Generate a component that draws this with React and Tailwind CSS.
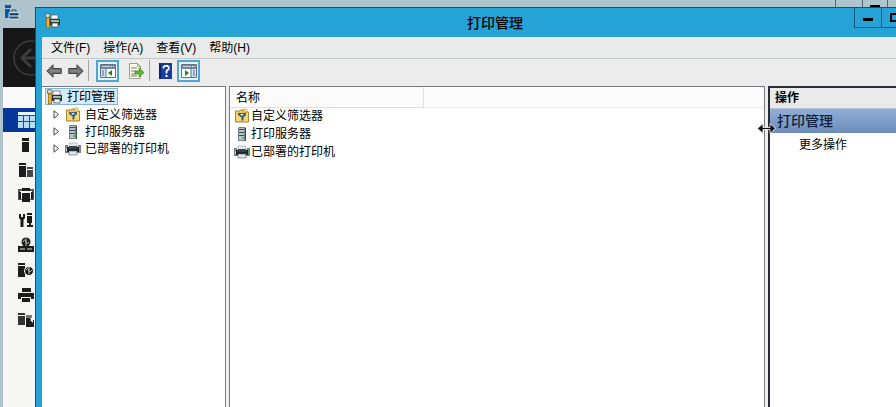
import React from 'react';

function PrintTools() {
  return (
    <svg viewBox="0 0 16 16" className="h-4 w-4 shrink-0" aria-hidden="true">
      <path d="M6 2h7v4H6z" fill="#fff" stroke="#555" strokeWidth=".7" />
      <path d="M5 6h10v6H5z" fill="#2d3238" />
      <path d="M6 7h8v2H6z" fill="#a9b4bb" />
      <path d="M7 10h6v4H7z" fill="#f4f8fa" stroke="#444" strokeWidth=".7" />
      <path d="M0 1.500 3 0l2.500 2-1.500 3H1z" fill="#d9d2bd" stroke="#5d4c2c" strokeWidth=".8" />
      <path d="M1.500 5h3v10h-3z" fill="#f3b51c" stroke="#8a5c00" strokeWidth=".7" />
      <path d="M13 7h1v1h-1z" fill="#46c04c" />
    </svg>
  );
}

function FilterFolder() {
  return (
    <svg viewBox="0 0 16 16" className="h-4 w-4 shrink-0" aria-hidden="true">
      <path d="M1.500 3h4l1-1h6v2h2v10h-13z" fill="#f2c557" stroke="#ad8433" />
      <path d="M2 5h12v8H2z" fill="#f8d678" />
      <path d="M4 5h8v2L9.500 9.500V12l-2 1V9.500L4 7z" fill="#3d5d72" />
      <path d="M6 6h4L8 8z" fill="#d7eef7" />
      <path d="M10 1h3v3h-3z" fill="#fff1b8" stroke="#b88c35" strokeWidth=".6" />
    </svg>
  );
}

function ServerTower() {
  return (
    <svg viewBox="0 0 16 16" className="h-4 w-4 shrink-0" aria-hidden="true">
      <path d="M5 1h6l1 1v13H4V2z" fill="#72828b" />
      <path d="M5 2h5v12H5z" fill="#b9c5ca" />
      <path d="M5 3h5v1H5zm0 3h5v1H5zm0 3h5v1H5z" fill="#3d4b54" />
      <path d="M8 11h2v2H8z" fill="#54c631" />
      <path d="M11 2h1v13h-1z" fill="#3c474e" />
    </svg>
  );
}

function PrinterColor() {
  return (
    <svg viewBox="0 0 16 16" className="h-4 w-4 shrink-0" aria-hidden="true">
      <path d="M4 2h8v4H4z" fill="#e6e9ec" stroke="#9ba0a5" strokeWidth=".6" />
      <path d="M0 4h3v2h10V4h3v8H0z" fill="#777f86" />
      <path d="M2 6h12v5H2z" fill="#20252a" />
      <path d="M4 5h8v3H4z" fill="#394149" />
      <path d="M4 10h8v4H4z" fill="#d9e6f0" stroke="#555f69" strokeWidth=".6" />
      <path d="M1 7h1v3H1z" fill="#c3cace" />
      <path d="M14 7h1v2h-1z" fill="#3db764" />
    </svg>
  );
}

function Arrow({ flip }) {
  return (
    <svg viewBox="0 0 16 14" className={flip ? 'h-[14px] w-4 rotate-180' : 'h-[14px] w-4'} aria-hidden="true">
      <path d="M.8 7 7 .8v3.700h8.200v5H7v3.700z" fill="#737373" stroke="#414141" />
      <path d="M4 7h10" stroke="#929292" />
    </svg>
  );
}

function PaneIcon({ right }) {
  return (
    <svg viewBox="0 0 16 14" className="h-[14px] w-4 shrink-0" aria-hidden="true">
      <path d="M.5.5h15v13H.5z" fill="#fff" stroke="#5f7287" />
      <path d="M1 1h14v4H1z" fill="#70869f" />
      <path d="M2 2h8v1H2z" fill="#c8d7e5" />
      <path d="M11 2h1v1h-1zm2 0h1v1h-1z" fill="#fff" />
      <path d={right ? 'M10 5h5v8h-5z' : 'M1 5h5v8H1z'} fill="#d3dfec" />
      <path d={right ? 'M10 5v8' : 'M6 5v8'} stroke="#5f7287" />
      <path d={right ? 'M12 7h2m-2 2h2m-2 2h2' : 'M2 7h2M2 9h2m-2 2h2'} stroke="#466d9c" />
      <path d={right ? 'M4 6v6l4-3z' : 'M12 6v6L8 9z'} fill="#1c8420" />
    </svg>
  );
}

function ExportIcon() {
  return (
    <svg viewBox="0 0 17 16" className="h-4 w-[17px]" aria-hidden="true">
      <path d="M1.500.5h8l3 3v12h-11z" fill="#fffde8" stroke="#a3a08c" />
      <path d="M9.500.5v3h3" fill="none" stroke="#a3a08c" />
      <path d="M3 5h6M3 8h5m-5 3h5m-5 2h6" stroke="#77777c" />
      <path d="M7 8h4V5l5 4.500-5 4.500v-3H7z" fill="#58bc2c" stroke="#378a20" strokeWidth=".7" />
    </svg>
  );
}

const navShapes = {
  server: <path d="M4 1h7v3H4zm0 4h7v10H4z" />,
  servers: (
    <>
      <path d="M1 1h7v2H1zm0 3h7v11H1z" />
      <path d="M9 5h6v2H9zm0 3h6v7H9z" fill="#444" />
    </>
  ),
  group: (
    <>
      <path d="M0 2h4v2H2v8h2v1H0zm12 0h4v11h-4v-1h2V4h-2z" fill="#555" />
      <path d="M4 1h8v3H4zm0 5h8v9H4z" />
      <path d="M1 5h2v7H1zm12 0h2v7h-2z" />
    </>
  ),
  tools: (
    <>
      <path d="M1 2h2v3h2V2h2v4L5.500 8v7h-3V8L1 6z" />
      <path d="M9 1h5v2H9zm0 3h5v7H9zm2 7h2v2h2v2H9v-2h2z" />
    </>
  ),
  network: (
    <>
      <circle cx="8" cy="5" r="4.500" />
      <path d="M5 5c1-3 3-2 3 0s2 2 3 0M8 1v8" fill="none" stroke="#bbb" />
      <path d="M0 9h16v6H0z" />
      <path d="M2 12h5m2 0h5" stroke="#ddd" />
    </>
  ),
  globe: (
    <>
      <path d="M0 1h7v2H0zm0 3h7v11H0z" />
      <circle cx="11" cy="9" r="4.500" stroke="#f8f8f4" />
      <path d="M8 8c2-3 3 0 3 1s2 1 3-1m-3-3v7" fill="none" stroke="#ccc" />
    </>
  ),
  printer: (
    <>
      <path d="M4 1h9v4H4zM0 6h16v6h-3v-2H3v2H0z" />
      <path d="M4 11h8v4H4z" />
    </>
  ),
  folders: (
    <>
      <path d="M0 1h7v2H0zm0 3h7v9H0z" fill="#333" />
      <path d="M8 3h6v3H8z" fill="#777" />
      <path d="M8 6h4l1 2h3v7H8z" />
      <path d="m12 8 3 3v-3z" fill="#eee" />
    </>
  ),
};

const navItems = [
  ['server', '本地服务器'],
  ['servers', '所有服务器'],
  ['group', '服务器组'],
  ['tools', '工具'],
  ['network', '网络'],
  ['globe', '远程服务'],
  ['printer', '打印服务'],
  ['folders', '文件服务'],
];

function ServerManager() {
  return (
    <aside className="flex w-[35px] shrink-0 flex-col overflow-hidden bg-[#afc3cc]">
      <div className="flex h-7 shrink-0 items-start pl-[5px] pt-[5px]">
        <svg viewBox="0 0 15 15" className="h-[15px] w-[15px]" aria-hidden="true">
          <path d="M0 0h6v3H0zm0 4h5v9H0z" fill="#0757ad" />
          <path d="M4 7.500h10V14H4z" fill="#24506f" stroke="#e5f2f8" strokeWidth=".8" />
          <path d="M4 11h10" fill="none" stroke="#e5f2f8" />
          <path d="M7 7V5h4v2" fill="none" stroke="#254c68" />
        </svg>
      </div>
      <div className="ml-[3px] flex min-h-0 flex-1 flex-col bg-[#f6f6f2]">
        <button aria-label="后退" className="flex h-[59px] shrink-0 items-center overflow-hidden bg-[#171717] pl-[10px]">
          <svg viewBox="0 0 36 36" className="h-9 w-9 shrink-0" fill="none" stroke="#3c3c3c" aria-hidden="true">
            <circle cx="18" cy="18" r="17" strokeWidth="1.500" />
            <path d="M30 18H9m9-9-9 9 9 9" strokeWidth="3" />
          </svg>
        </button>
        <div className="h-[21px] shrink-0 bg-[#fafafa]" />
        <nav className="flex flex-col">
          <button aria-label="仪表板" className="flex h-6 items-center bg-[#06389a] pl-[15px]">
            <svg viewBox="0 0 17 16" className="h-4 w-[17px] shrink-0" aria-hidden="true">
              <path d="M0 0h17v16H0z" fill="#b5dff8" />
              <path d="M0 0h17v3H0z" fill="#e7f7ff" />
              <path d="M0 3.500h17M0 9.500h17M5.500 4v12m6-12v12" stroke="#124caa" />
            </svg>
          </button>
          {navItems.map(([shape, label]) => (
            <button key={shape} aria-label={label} className="flex h-[25px] items-center pl-[15px]">
              <svg viewBox="0 0 16 16" className="h-4 w-4 shrink-0" fill="#1b1b1b" aria-hidden="true">
                {navShapes[shape]}
              </svg>
            </button>
          ))}
        </nav>
      </div>
    </aside>
  );
}

function Toolbar() {
  return (
    <div className="flex h-7 shrink-0 items-center border-t border-[#c4c7c8] bg-[#ececed] pb-1 pl-1">
      <button aria-label="后退"><Arrow /></button>
      <button aria-label="前进" className="ml-[6px]"><Arrow flip /></button>
      <span className="ml-1 h-[21px] w-px bg-[#a6a6a6]" />
      <button aria-label="显示控制台树" className="ml-[7px] flex h-[22px] w-[23px] items-center justify-center border-2 border-[#4fa5d4] bg-[#e4f2fa]"><PaneIcon /></button>
      <button aria-label="导出列表" className="ml-[9px]"><ExportIcon /></button>
      <span className="ml-[4px] h-[21px] w-px bg-[#a6a6a6]" />
      <button aria-label="帮助" className="ml-[9px]">
        <svg viewBox="0 0 13 16" className="h-4 w-[13px]" aria-hidden="true">
          <path d="M0 0h13v16H0z" fill="#173da0" />
          <path d="M0 0h2v16H0z" fill="#0a246f" />
          <path d="M4.500 5.500V4L6 2.800h2.200L9.700 4v2L7.500 8v2.500" fill="none" stroke="#fff" strokeWidth="1.800" />
          <path d="M6.500 12h2v2h-2z" fill="#fff" />
        </svg>
      </button>
      <button aria-label="显示操作窗格" className="ml-[5px] flex h-[22px] w-[23px] items-center justify-center border-2 border-[#4fa5d4] bg-[#e4f2fa]"><PaneIcon right /></button>
    </div>
  );
}

const entries = [
  ['自定义筛选器', FilterFolder],
  ['打印服务器', ServerTower],
  ['已部署的打印机', PrinterColor],
];

function Tree() {
  return (
    <section aria-label="控制台树" className="w-[184px] shrink-0 border-r border-t border-[#777b80] bg-white pl-[3px] pt-px">
      <button className="flex h-[17px] items-center border border-[#84b5dd] bg-[#d7eafa] pl-px pr-[2px]">
        <PrintTools />
        <span className="ml-1">打印管理</span>
      </button>
      <ul className="pt-px">
        {entries.map(([label, Icon]) => (
          <li key={label} className="flex h-[17px] items-center pl-2">
            <button aria-label={'展开' + label} className="w-3">
              <svg viewBox="0 0 7 9" className="h-[9px] w-[7px]" aria-hidden="true">
                <path d="M1 .8v7.400l4.500-3.700z" fill="#fff" stroke="#444" />
              </svg>
            </button>
            <Icon />
            <span className="ml-1">{label}</span>
          </li>
        ))}
      </ul>
    </section>
  );
}

function ListPane() {
  return (
    <section className="min-w-0 flex-1 border-x border-t border-[#777b80] bg-white">
      <table className="w-full table-fixed border-collapse text-left">
        <colgroup>
          <col className="w-[193px]" />
          <col />
        </colgroup>
        <thead>
          <tr className="h-5">
            <th scope="col" className="border-b border-r border-[#dedfe1] bg-[#fbfbfb] p-0 pl-[6px] pt-[2px] font-normal">名称</th>
            <td className="border-b border-[#ededed] bg-[#fcfcfc] p-0" />
          </tr>
        </thead>
        <tbody>
          {entries.map(([label, Icon]) => (
            <tr key={label} className="h-[18px]">
              <td className="p-0 pl-1">
                <div className="flex items-center gap-px"><Icon /><span>{label}</span></div>
              </td>
              <td className="p-0" />
            </tr>
          ))}
        </tbody>
      </table>
    </section>
  );
}

function Actions() {
  return (
    <section className="relative w-[128px] shrink-0 border-l-2 border-t-2 border-[#292c32] bg-white">
      <h2 className="flex h-5 items-center bg-[#eaeaea] pl-[5px] font-bold">操作</h2>
      <h3 className="flex h-[25px] items-center border-t border-[#b6c4d8] bg-linear-to-b from-[#91afd5] to-[#6d8cb9] pl-[7px] text-[14px] font-medium text-[#10213f]">打印管理</h3>
      <button className="mt-[3px] flex h-[18px] items-center pl-[29px]">更多操作</button>
      <svg viewBox="0 0 19 11" className="absolute -left-[13px] top-[35px] h-[11px] w-[19px]" aria-hidden="true">
        <path d="M.5 5.500 6 .5v4h7v-4l5.500 5-5.500 5v-4H6v4z" fill="#111" stroke="#fff" strokeWidth=".8" />
      </svg>
    </section>
  );
}

function PrintWindow() {
  return (
    <main className="flex min-h-0 flex-1 flex-col border-l border-t border-[#17516e] bg-[#25a2d6] pl-[6px]">
      <header className="flex h-[29px] shrink-0 items-start">
        <div className="w-[42px] pl-[3px] pt-[5px]"><PrintTools /></div>
        <h1 className="flex h-full flex-1 items-center justify-center pl-[52px] text-[14px] font-medium">打印管理</h1>
        <div className="flex h-5 w-[42px] overflow-hidden border-b border-l border-[#145a7b]">
          <button aria-label="最小化" className="flex w-[27px] shrink-0 items-center justify-center border-r border-[#145a7b]">
            <span className="mt-[3px] h-[3px] w-[10px] bg-black" />
          </button>
          <button aria-label="最大化" className="flex w-[27px] shrink-0 items-center justify-center">
            <span className="h-[9px] w-3 border-2 border-black" />
          </button>
        </div>
      </header>
      <nav className="flex h-[21px] shrink-0 items-center gap-[13px] bg-[#e9ebeb] pl-[9px]">
        <button>文件(F)</button>
        <button>操作(A)</button>
        <button>查看(V)</button>
        <button>帮助(H)</button>
      </nav>
      <Toolbar />
      <div className="flex min-h-0 flex-1 gap-[3px] bg-[#eeeeef]">
        <Tree />
        <ListPane />
        <Actions />
      </div>
    </main>
  );
}

export default function App() {
  return (
    <div className="flex h-screen overflow-hidden bg-[#afc3cc] font-['Liberation_Sans','Noto_Sans_CJK_SC',sans-serif] text-[12px] leading-4 text-black">
      <ServerManager />
      <div className="flex min-w-0 flex-1 flex-col">
        <div className="flex h-[7px] shrink-0 justify-end overflow-hidden">
          <span className="w-[27px] border-l border-[#526670]" />
          <span className="flex w-[25px] items-end justify-center border-l border-[#526670]"><span className="h-[2px] w-[10px] bg-black" /></span>
          <span className="w-[9px] border-l border-[#526670]" />
        </div>
        <PrintWindow />
      </div>
    </div>
  );
}
